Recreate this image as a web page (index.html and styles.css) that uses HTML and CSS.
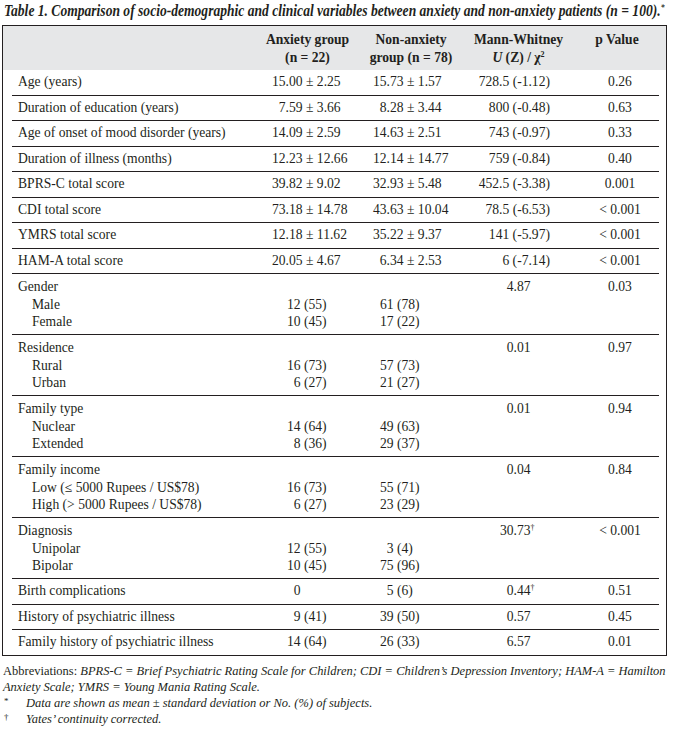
FILE: index.html
```html
<!DOCTYPE html>
<html>
<head>
<meta charset="utf-8">
<link rel="stylesheet" href="styles.css">
</head>
<body>
<div class="page">
  <div class="title"><span class="title-in">Table 1. Comparison of socio-demographic and clinical variables between anxiety and non-anxiety patients (<i>n</i> = 100).<sup>*</sup></span></div>
  <div class="box">
    <div class="head">
      <div class="hc"></div>
      <div class="hc">Anxiety group<br>(n = 22)</div>
      <div class="hc">Non-anxiety<br>group (n = 78)</div>
      <div class="hc">Mann-Whitney<br><i>U</i> (Z) / χ<sup class="sq">2</sup></div>
      <div class="hc">p Value</div>
    </div>
    <div class="body">
      <div class="row"><div class="lab">Age (years)</div><div class="anx m">15.00 ± 2.25</div><div class="non m">15.73 ± 1.57</div><div class="mw u">728.5 (-1.12)</div><div class="p">0.26</div></div>
      <div class="row"><div class="lab">Duration of education (years)</div><div class="anx m"><span class="f"></span>7.59 ± 3.66</div><div class="non m"><span class="f"></span>8.28 ± 3.44</div><div class="mw u">800 (-0.48)</div><div class="p">0.63</div></div>
      <div class="row"><div class="lab">Age of onset of mood disorder (years)</div><div class="anx m">14.09 ± 2.59</div><div class="non m">14.63 ± 2.51</div><div class="mw u">743 (-0.97)</div><div class="p">0.33</div></div>
      <div class="row"><div class="lab">Duration of illness (months)</div><div class="anx m">12.23 ± 12.66</div><div class="non m">12.14 ± 14.77</div><div class="mw u">759 (-0.84)</div><div class="p">0.40</div></div>
      <div class="row"><div class="lab">BPRS-C total score</div><div class="anx m">39.82 ± 9.02</div><div class="non m">32.93 ± 5.48</div><div class="mw u">452.5 (-3.38)</div><div class="p">0.001</div></div>
      <div class="row"><div class="lab">CDI total score</div><div class="anx m">73.18 ± 14.78</div><div class="non m">43.63 ± 10.04</div><div class="mw u">78.5 (-6.53)</div><div class="p">&lt; 0.001</div></div>
      <div class="row"><div class="lab">YMRS total score</div><div class="anx m">12.18 ± 11.62</div><div class="non m">35.22 ± 9.37</div><div class="mw u">141 (-5.97)</div><div class="p">&lt; 0.001</div></div>
      <div class="row"><div class="lab">HAM-A total score</div><div class="anx m">20.05 ± 4.67</div><div class="non m"><span class="f"></span>6.34 ± 2.53</div><div class="mw u">6 (-7.14)</div><div class="p">&lt; 0.001</div></div>

      <div class="row grp"><div class="lab">Gender<br><span class="sub">Male</span><br><span class="sub">Female</span></div><div class="anx n"><br>12 (55)<br>10 (45)</div><div class="non n"><br>61 (78)<br>17 (22)</div><div class="mw c"><span class="f"></span>4.87</div><div class="p">0.03</div></div>
      <div class="row grp"><div class="lab">Residence<br><span class="sub">Rural</span><br><span class="sub">Urban</span></div><div class="anx n"><br>16 (73)<br><span class="f"></span>6 (27)</div><div class="non n"><br>57 (73)<br>21 (27)</div><div class="mw c"><span class="f"></span>0.01</div><div class="p">0.97</div></div>
      <div class="row grp"><div class="lab">Family type<br><span class="sub">Nuclear</span><br><span class="sub">Extended</span></div><div class="anx n"><br>14 (64)<br><span class="f"></span>8 (36)</div><div class="non n"><br>49 (63)<br>29 (37)</div><div class="mw c"><span class="f"></span>0.01</div><div class="p">0.94</div></div>
      <div class="row grp"><div class="lab">Family income<br><span class="sub">Low (≤ 5000 Rupees / US$78)</span><br><span class="sub">High (&gt; 5000 Rupees / US$78)</span></div><div class="anx n"><br>16 (73)<br><span class="f"></span>6 (27)</div><div class="non n"><br>55 (71)<br>23 (29)</div><div class="mw c"><span class="f"></span>0.04</div><div class="p">0.84</div></div>
      <div class="row grp"><div class="lab">Diagnosis<br><span class="sub">Unipolar</span><br><span class="sub">Bipolar</span></div><div class="anx n"><br>12 (55)<br>10 (45)</div><div class="non n"><br><span class="f"></span>3 (4)<br>75 (96)</div><div class="mw c">30.73<sup class="dg">†</sup></div><div class="p">&lt; 0.001</div></div>

      <div class="row"><div class="lab">Birth complications</div><div class="anx n"><span class="f"></span>0</div><div class="non n"><span class="f"></span>5 (6)</div><div class="mw c"><span class="f"></span>0.44<sup class="dg">†</sup></div><div class="p">0.51</div></div>
      <div class="row"><div class="lab">History of psychiatric illness</div><div class="anx n"><span class="f"></span>9 (41)</div><div class="non n">39 (50)</div><div class="mw c"><span class="f"></span>0.57</div><div class="p">0.45</div></div>
      <div class="row last"><div class="lab">Family history of psychiatric illness</div><div class="anx n">14 (64)</div><div class="non n">26 (33)</div><div class="mw c"><span class="f"></span>6.57</div><div class="p">0.01</div></div>
    </div>
  </div>
  <div class="foot">
    <div class="fl"><span class="cond">Abbreviations: <i>BPRS-C = Brief Psychiatric Rating Scale for Children; CDI = Children’s Depression Inventory; HAM-A = Hamilton</i></span></div>
    <div class="fl"><span class="cond"><i>Anxiety Scale; YMRS = Young Mania Rating Scale.</i></span></div>
    <div class="fn"><span class="mk">*</span><span class="cond"><i>Data are shown as mean ± standard deviation or No. (%) of subjects.</i></span></div>
    <div class="fn"><span class="mk">†</span><span class="cond"><i>Yates’ continuity corrected.</i></span></div>
  </div>
</div>
</body>
</html>
```
FILE: styles.css
```css
html, body {
  margin: 0;
  padding: 0;
  background: #ffffff;
}
body {
  font-family: "Liberation Serif", "Times New Roman", serif;
  color: #231f20;
  font-size: 13.6px;
}
.page {
  width: 673px;
  overflow: hidden;
}
.title {
  height: 20px;
  padding-top: 1px;
  margin-bottom: 4px;
  padding-left: 4px;
  white-space: nowrap;
}
.title-in {
  display: inline-block;
  font-size: 16px;
  line-height: 20px;
  font-weight: bold;
  font-style: italic;
  transform: scaleX(0.848);
  transform-origin: left center;
}
.title-in sup {
  font-size: 9px;
  vertical-align: 6px;
  line-height: 0;
}
.box {
  margin-left: 2px;
  width: 665px;
  box-sizing: border-box;
  border: 1px solid #231f20;
}
.head, .row {
  display: grid;
  grid-template-columns: 243px 105px 102px 113px 84px;
}
.head {
  background: #e6e7e8;
  padding: 5px 7px 4px 9px;
  font-weight: bold;
  line-height: 17.5px;
}
.hc {
  text-align: center;
}
.sq {
  font-size: 8px;
  vertical-align: 5px;
  line-height: 0;
  font-weight: bold;
}
.body {
  padding: 0 7px 0 9px;
}
.row {
  border-bottom: 1px solid #231f20;
  padding: 4px 0 4px;
  line-height: 16.5px;
  white-space: nowrap;
}
.row.grp {
  line-height: 17.5px;
  padding: 4px 0 3.5px;
}
.row.last {
  border-bottom: none;
}
.lab {
  padding-left: 6px;
}
.sub {
  padding-left: 14px;
}
.anx.m { padding-left: 17px; }
.anx.n { padding-left: 32px; }
.non.m { padding-left: 13px; }
.non.n { padding-left: 20px; }
.mw.u { text-align: right; padding-right: 25px; }
.mw.c { padding-left: 38px; }
.p { text-align: center; padding-left: 6px; }
.f {
  display: inline-block;
  width: 0.5em;
}
.dg {
  font-size: 8px;
  vertical-align: 5px;
  line-height: 0;
}
.foot {
  margin-top: 7px;
  padding-left: 3px;
  font-size: 13px;
  line-height: 16.2px;
  white-space: nowrap;
}
.cond {
  display: inline-block;
  transform: scaleX(0.96);
  transform-origin: left center;
}
.fn {
  display: flex;
}
.mk {
  width: 22px;
  font-size: 9px;
  line-height: 12px;
  padding-left: 1px;
}
```
